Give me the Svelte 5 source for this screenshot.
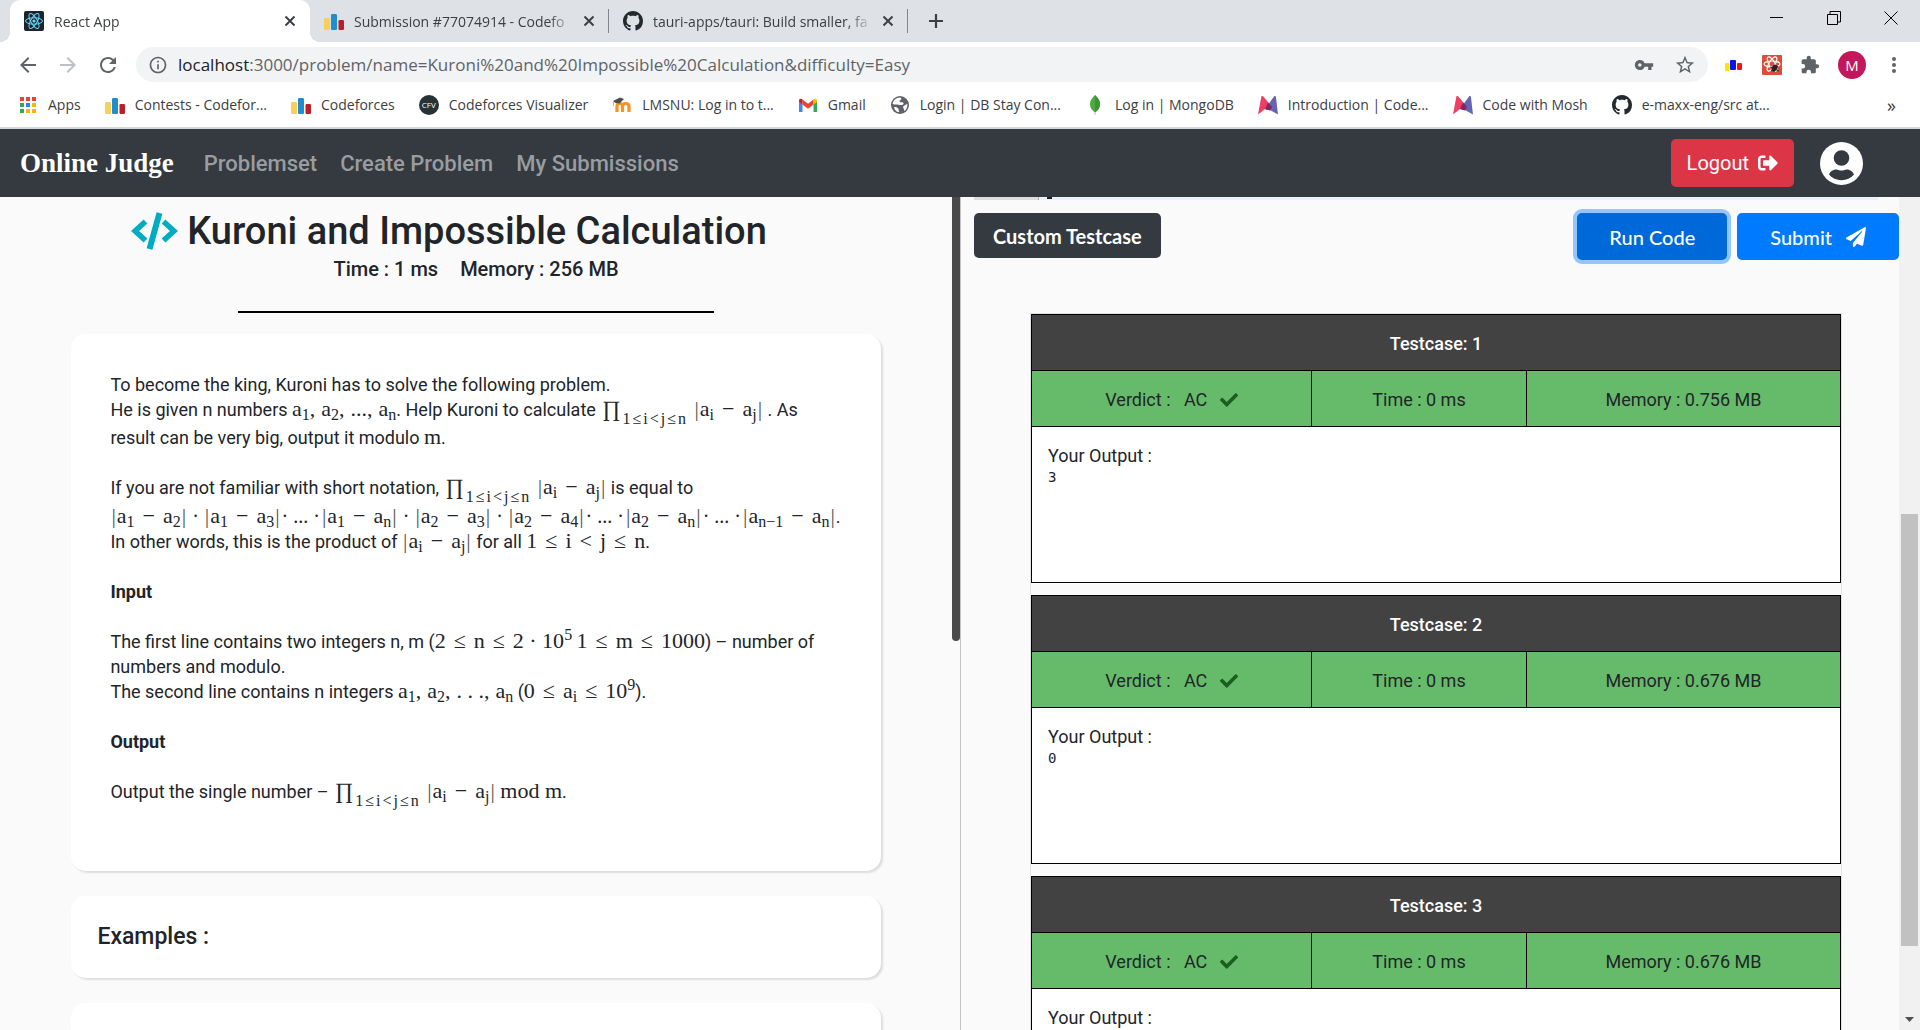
<script>
  const tabs = [
    { title: 'React App', icon: 'react', active: true },
    { title: 'Submission #77074914 - Codefo', icon: 'bars', active: false },
    { title: 'tauri-apps/tauri: Build smaller, fa', icon: 'github', active: false }
  ];

  const bookmarks = [
    { label: 'Apps', icon: 'apps' },
    { label: 'Contests - Codefor...', icon: 'bars' },
    { label: 'Codeforces', icon: 'bars' },
    { label: 'Codeforces Visualizer', icon: 'cfv' },
    { label: 'LMSNU: Log in to t...', icon: 'moodle' },
    { label: 'Gmail', icon: 'gmail' },
    { label: 'Login | DB Stay Con...', icon: 'globe' },
    { label: 'Log in | MongoDB', icon: 'leaf' },
    { label: 'Introduction | Code...', icon: 'mosh' },
    { label: 'Code with Mosh', icon: 'mosh' },
    { label: 'e-maxx-eng/src at...', icon: 'github' }
  ];

  const links = ['Problemset', 'Create Problem', 'My Submissions'];

  const results = [
    { id: 1, verdict: 'AC', time: '0 ms', memory: '0.756 MB', output: '3' },
    { id: 2, verdict: 'AC', time: '0 ms', memory: '0.676 MB', output: '0' },
    { id: 3, verdict: 'AC', time: '0 ms', memory: '0.676 MB', output: '' }
  ];

  let path = $state(':3000/problem/name=Kuroni%20and%20Impossible%20Calculation&difficulty=Easy');
</script>

{#snippet icon(name)}
  {#if name === 'react'}
    <svg class="fav" viewBox="0 0 20 20" aria-hidden="true">
      <rect width="20" height="20" rx="2" fill="#20232a" />
      <g fill="none" stroke="#61dafb" stroke-width="1">
        <ellipse cx="10" cy="10" rx="8.5" ry="3.2" />
        <ellipse cx="10" cy="10" rx="8.5" ry="3.2" transform="rotate(60 10 10)" />
        <ellipse cx="10" cy="10" rx="8.5" ry="3.2" transform="rotate(120 10 10)" />
      </g>
      <circle cx="10" cy="10" r="1.6" fill="#61dafb" />
    </svg>
  {:else if name === 'bars'}
    <svg class="fav" viewBox="0 0 20 20" aria-hidden="true">
      <rect x="0" y="7" width="6" height="12" rx="1.2" fill="#f8cf58" />
      <rect x="7" y="3" width="6" height="16" rx="1.2" fill="#1f8dcf" />
      <rect x="14.500" y="9" width="5.500" height="10" rx="1.2" fill="#b8202c" />
    </svg>
  {:else if name === 'github'}
    <svg class="fav" viewBox="0 0 16 16" aria-hidden="true">
      <path fill="#24292e" d="M8 0C3.58 0 0 3.58 0 8c0 3.54 2.29 6.53 5.47 7.59.4.07.55-.17.55-.38 0-.19-.01-.82-.01-1.490-2.010.37-2.530-.49-2.690-.94-.09-.23-.48-.94-.82-1.130-.28-.15-.68-.52-.01-.53.63-.01 1.080.58 1.230.82.72 1.210 1.870.87 2.330.66.07-.52.28-.87.51-1.070-1.780-.2-3.640-.89-3.640-3.950 0-.87.31-1.590.82-2.150-.08-.2-.36-1.020.08-2.120 0 0 .67-.21 2.200.82.64-.18 1.320-.27 2-.27s1.360.09 2 .27c1.530-1.040 2.200-.82 2.200-.82.44 1.100.16 1.920.08 2.120.51.56.82 1.270.82 2.150 0 3.070-1.870 3.750-3.650 3.950.29.25.54.73.54 1.480 0 1.070-.01 1.930-.01 2.200 0 .21.15.46.55.38A8.010 8.010 0 0 0 16 8c0-4.420-3.580-8-8-8z" />
    </svg>
  {:else if name === 'apps'}
    <svg class="fav apps" viewBox="0 0 18 20" aria-hidden="true">
      <g fill="#ea4335"><rect x="0" y="2" width="4" height="4" /><rect x="6" y="2" width="4" height="4" /><rect x="12" y="2" width="4" height="4" /></g>
      <rect x="0" y="8" width="4" height="4" fill="#34a853" /><rect x="6" y="8" width="4" height="4" fill="#1a8cff" /><rect x="12" y="8" width="4" height="4" fill="#fbb605" />
      <rect x="0" y="14" width="4" height="4" fill="#34a853" /><rect x="6" y="14" width="4" height="4" fill="#fbb605" /><rect x="12" y="14" width="4" height="4" fill="#fbb605" />
    </svg>
  {:else if name === 'cfv'}
    <span class="cfv">CFV</span>
  {:else if name === 'moodle'}
    <svg class="fav" viewBox="0 0 20 20" aria-hidden="true">
      <path d="M5 17v-5.500c0-4 5.500-4 5.500 0V17m0-5.500c0-4 6.500-4 6.500 0V17" fill="none" stroke="#f7931e" stroke-width="3.200" />
      <path d="M1 6l7-3.500L12 4 7.500 8.500 3.500 8z" fill="#4d4d4d" />
      <path d="M1.500 6v5" stroke="#b9a184" stroke-width=".8" />
    </svg>
  {:else if name === 'gmail'}
    <svg class="fav" viewBox="0 0 20 20" aria-hidden="true">
      <path fill="#4285f4" d="M1 17h3.500V9L1 6z" /><path fill="#34a853" d="M15.500 17H19V6l-3.500 3z" />
      <path fill="#ea4335" d="M4.500 9.500V4.500L10 8.700l5.500-4.200v5L10 13.700z" />
      <path fill="#c5221f" d="M1 5.500v1.300l3.500 2.700v-5C3 3 1 3.700 1 5.500z" />
      <path fill="#fbbc04" d="M19 5.500v1.300l-3.500 2.700v-5C17 3 19 3.700 19 5.500z" />
    </svg>
  {:else if name === 'globe'}
    <svg class="fav" viewBox="0 0 20 20" aria-hidden="true">
      <circle cx="10" cy="10" r="9" fill="#5f6368" />
      <path fill="#fff" d="M10 2.500c2 .5 1.500 2 .5 2.500S9 6.500 10 7s3-.5 3.500 1-1 2-2.500 2-3-.5-5-.5S2.500 9 2.600 9C3 5.500 6 2.500 10 2.500zM4 12c2 0 4 .5 4.500 2s0 2.500 1 3C6.500 17.500 4.500 15 4 12zM17.400 9c.3 3-1 5.500-3 7-.5-1-.2-2-.9-2.800s-.5-2.200 1-2.700S16 9 17.400 9z" />
    </svg>
  {:else if name === 'leaf'}
    <svg class="fav" viewBox="0 0 20 20" aria-hidden="true">
      <path fill="#4faa41" d="M10 0c4 4 5 6.500 5 9.500 0 3-2 6-5 8-3-2-5-5-5-8C5 6.500 6 4 10 0z" />
      <path fill="#3f9436" d="M10 0c4 4 5 6.500 5 9.500 0 3-2 6-5 8z" /><path d="M10 17v3" stroke="#c2bfbf" />
    </svg>
  {:else if name === 'mosh'}
    <svg class="fav" viewBox="0 0 20 20" aria-hidden="true">
      <path fill="#f03d63" d="M3.500 1C5 .5 6 2 7 3.500L14 12l-2 3-5-1-7 5.500z" />
      <path fill="#6464b2" d="M16 1.500c1-.8 1.800-.3 2 1l2 17-8-4.500-5-1z" />
      <path fill="#7c2a63" d="M10.200 7.500L14 12l-2 3.500L7 14z" />
    </svg>
  {/if}
{/snippet}

{#snippet cross()}
  <svg class="x" viewBox="0 0 12 12" aria-hidden="true"><path d="M1.500 1.500l9 9m0-9l-9 9" stroke="#3c4043" stroke-width="2" /></svg>
{/snippet}

{#snippet term(i)}<span>a<sub>{i}</sub></span>{/snippet}

{#snippet diff(i, j)}<span class="m"><span class="bar">|</span>{@render term(i)}<span class="op">−</span>{@render term(j)}<span class="bar">|</span></span>{/snippet}

{#snippet prod()}<span class="m"><span class="pi">∏</span><sub class="range">1<u>≤</u>i<u>&lt;</u>j<u>≤</u>n</sub></span> {@render diff('i', 'j')}{/snippet}

<div class="window">
  <header class="chrome">
    <div class="tabs">
      {#each tabs as tab}
        <div class="tab" class:active={tab.active}>
          {@render icon(tab.icon)}
          <span class="title">{tab.title}</span>
          <button class="plain" aria-label="Close tab">{@render cross()}</button>
        </div>
      {/each}
      <button class="plain add" aria-label="New tab">
        <svg width="16" height="16" viewBox="0 0 16 16"><path d="M8 1v14M1 8h14" stroke="#3c4043" stroke-width="2.200" /></svg>
      </button>
      <div class="controls">
        <button class="plain" aria-label="Minimize"><svg width="14" height="14" viewBox="0 0 14 14"><path d="M0 6.500h13" stroke="#000" /></svg></button>
        <button class="plain" aria-label="Restore"><svg width="14" height="14" viewBox="0 0 14 14" fill="none" stroke="#000"><path d="M.5 3.500h10v10H.5zM3 3V.5h10.500V11H11" /></svg></button>
        <button class="plain" aria-label="Close window"><svg width="14" height="14" viewBox="0 0 14 14"><path d="M.5.500l13 13m0-13l-13 13" stroke="#000" /></svg></button>
      </div>
    </div>

    <div class="toolbar">
      <button class="plain" aria-label="Back"><svg width="24" height="24" viewBox="0 0 24 24"><path fill="#5f6368" d="M20 11H7.830l5.590-5.590L12 4l-8 8 8 8 1.410-1.410L7.830 13H20v-2z" /></svg></button>
      <button class="plain" aria-label="Forward"><svg width="24" height="24" viewBox="0 0 24 24"><path fill="#bdc1c6" d="M12 4l-1.410 1.410L16.170 11H4v2h12.170l-5.580 5.590L12 20l8-8z" /></svg></button>
      <button class="plain" aria-label="Reload"><svg width="24" height="24" viewBox="0 0 24 24"><path fill="#5f6368" d="M17.650 6.350A7.958 7.958 0 0 0 12 4c-4.420 0-7.990 3.580-7.990 8s3.570 8 7.990 8c3.730 0 6.840-2.550 7.730-6h-2.080A5.990 5.990 0 0 1 12 18c-3.310 0-6-2.690-6-6s2.690-6 6-6c1.660 0 3.140.69 4.220 1.780L13 11h7V4l-2.350 2.350z" /></svg></button>
      <div class="omnibox">
        <svg width="20" height="20" viewBox="0 0 24 24" aria-hidden="true"><path fill="#5f6368" d="M11 17h2v-6h-2v6zm1-15C6.480 2 2 6.480 2 12s4.480 10 10 10 10-4.480 10-10S17.520 2 12 2zm0 18c-4.410 0-8-3.590-8-8s3.590-8 8-8 8 3.590 8 8-3.590 8-8 8zM11 9h2V7h-2v2z" /></svg>
        <label for="url">localhost</label>
        <input id="url" type="text" bind:value={path} />
        <button class="plain" aria-label="Passwords"><svg width="20" height="20" viewBox="0 0 24 24"><path fill="#5f6368" d="M12.650 10A5.990 5.990 0 0 0 7 6c-3.310 0-6 2.690-6 6s2.690 6 6 6a5.990 5.990 0 0 0 5.650-4H17v4h4v-4h2v-4H12.650zM7 14c-1.100 0-2-.9-2-2s.9-2 2-2 2 .9 2 2-.9 2-2 2z" /></svg></button>
        <button class="plain" aria-label="Bookmark"><svg width="22" height="22" viewBox="0 0 24 24"><path fill="#5f6368" d="M22 9.240l-7.190-.62L12 2 9.190 8.630 2 9.240l5.460 4.730L5.820 21 12 17.270 18.180 21l-1.630-7.030L22 9.240zM12 15.400l-3.760 2.270 1-4.280-3.320-2.880 4.380-.38L12 6.100l1.710 4.040 4.380.38-3.320 2.880 1 4.280L12 15.400z" /></svg></button>
      </div>
      <div class="extensions">
        <button class="plain" aria-label="Codeforces extension">
          <svg width="20" height="20" viewBox="0 0 20 20"><rect x="1" y="8" width="4.500" height="8" rx="1" fill="#ffe600" /><rect x="6" y="5" width="6" height="10" rx="1" fill="#0a14f0" /><rect x="13" y="8" width="5" height="7" rx="1" fill="#f01414" /></svg>
        </button>
        <button class="plain" aria-label="React developer tools">
          <svg width="20" height="20" viewBox="0 0 20 20"><rect width="20" height="20" rx="1" fill="#dd4b39" /><g fill="none" stroke="#fff" stroke-width="1.100"><ellipse cx="10" cy="9" rx="8" ry="3" /><ellipse cx="10" cy="9" rx="8" ry="3" transform="rotate(60 10 9)" /><ellipse cx="10" cy="9" rx="8" ry="3" transform="rotate(120 10 9)" /></g><ellipse cx="12.500" cy="13" rx="2.600" ry="3.600" fill="#20232a" transform="rotate(35 12.500 13)" /><path d="M8 12l9 4M9 16l7-5M12 17l2-7" stroke="#20232a" /></svg>
        </button>
        <button class="plain" aria-label="Extensions">
          <svg width="20" height="20" viewBox="0 0 24 24"><path fill="#5f6368" d="M20.500 11H19V7c0-1.100-.9-2-2-2h-4V3.500a2.500 2.500 0 0 0-5 0V5H4c-1.100 0-2 .9-2 2v3.800h1.500a2.700 2.700 0 0 1 0 5.400H2V20c0 1.100.9 2 2 2h3.800v-1.500a2.700 2.700 0 0 1 5.400 0V22H17c1.100 0 2-.9 2-2v-4h1.500a2.500 2.500 0 0 0 0-5z" /></svg>
        </button>
        <button class="plain profile" aria-label="Profile">M</button>
        <button class="plain" aria-label="Menu">
          <svg width="20" height="20" viewBox="0 0 20 20" fill="#5f6368"><circle cx="10" cy="4" r="2" /><circle cx="10" cy="10" r="2" /><circle cx="10" cy="16" r="2" /></svg>
        </button>
      </div>
    </div>

    <nav class="bookmarks" aria-label="Bookmarks">
      {#each bookmarks as mark}
        <a href="#bookmark">{@render icon(mark.icon)}<span>{mark.label}</span></a>
      {/each}
      <button class="plain more" aria-label="More bookmarks">»</button>
    </nav>
  </header>

  <nav class="navbar" aria-label="Main">
    <a class="brand" href="#home">Online Judge</a>
    {#each links as link}
      <a class="link" href="#nav">{link}</a>
    {/each}
    <button class="logout">
      Logout
      <svg width="20" height="20" viewBox="0 0 512 512" aria-hidden="true"><path fill="#fff" d="M497 273L329 441c-15 15-41 4.500-41-17v-96H152c-13.300 0-24-10.700-24-24v-96c0-13.300 10.700-24 24-24h136V88c0-21.400 25.900-32 41-17l168 168c9.300 9.400 9.300 24.600 0 34zM192 436v-40c0-6.600-5.400-12-12-12H96c-17.700 0-32-14.300-32-32V160c0-17.700 14.300-32 32-32h84c6.600 0 12-5.400 12-12V76c0-6.600-5.400-12-12-12H96c-53 0-96 43-96 96v192c0 53 43 96 96 96h84c6.600 0 12-5.400 12-12z" /></svg>
    </button>
    <a class="account" href="#account" aria-label="Account">
      <svg width="43" height="43" viewBox="0 0 43 43"><circle cx="21.500" cy="21.500" r="21.500" fill="#fff" /><ellipse cx="21.500" cy="16" rx="7.800" ry="7.700" fill="#343a40" /><path fill="#343a40" d="M9 32.500c1.500-4.500 7-6 9.500-4.600 2 .9 4 .9 6 0C27 26.500 32.500 28 34 32.500c-6 7.500-19 7.500-25 0z" /></svg>
    </a>
  </nav>

  <main>
    <section class="problem">
      <div class="scroll">
        <h1>
          <svg width="47" height="38" viewBox="0 0 47 38" aria-hidden="true"><g fill="none" stroke="#00acc1"><path d="M14.500 9.500L4 19l10.500 9.500M32.500 9.500L43 19l-10.500 9.500" stroke-width="5.500" /><path d="M28.500 1L18.500 37" stroke-width="6" /></g></svg>
          Kuroni and Impossible Calculation
        </h1>
        <p class="limits"><span>Time : 1 ms</span><span>Memory : 256 MB</span></p>
        <hr />

        <article class="card statement">
          <div class="para">
            <p>To become the king, Kuroni has to solve the following problem.</p>
            <p class="tall">He is given n numbers <span class="m">{@render term('1')}<i>,</i>{@render term('2')}<i>,</i>...<i>,</i>{@render term('n')}</span>. Help Kuroni to calculate {@render prod()} . As</p>
            <p>result can be very big, output it modulo <span class="m">m</span>.</p>
          </div>
          <div class="para">
            <p class="tall">If you are not familiar with short notation, {@render prod()} is equal to</p>
            <p class="equation">{@render diff('1', '2')}<b>·</b>{@render diff('1', '3')}<b class="dots">· ... ·</b>{@render diff('1', 'n')}<b>·</b>{@render diff('2', '3')}<b>·</b>{@render diff('2', '4')}<b class="dots">· ... ·</b>{@render diff('2', 'n')}<b class="dots">· ... ·</b>{@render diff('n−1', 'n')}.</p>
            <p>In other words, this is the product of {@render diff('i', 'j')} for all <span class="m">1<span class="op">≤</span>i<span class="op">&lt;</span>j<span class="op">≤</span>n</span>.</p>
          </div>
          <h3>Input</h3>
          <div class="para">
            <p>The first line contains two integers n, m (<span class="m">2<span class="op">≤</span>n<span class="op">≤</span>2 · 10<sup>5</sup></span> <span class="m">1<span class="op">≤</span>m<span class="op">≤</span>1000</span>) – number of</p>
            <p>numbers and modulo.</p>
            <p>The second line contains n integers <span class="m">{@render term('1')}<i>,</i>{@render term('2')}<i>,</i>. . .<i>,</i>{@render term('n')}</span> (<span class="m">0<span class="op">≤</span>{@render term('i')}<span class="op">≤</span>10<sup>9</sup></span>).</p>
          </div>
          <h3>Output</h3>
          <div class="para">
            <p class="tall">Output the single number – {@render prod()} <span class="m">mod m</span>.</p>
          </div>
        </article>

        <article class="card"><h2>Examples :</h2></article>
        <article class="card"></article>
      </div>
      <div class="rail"></div>
    </section>

    <section class="editor">
      <div class="scroll">
        <div class="code-edge"><span class="gutter"></span><span class="glyph"></span></div>
        <div class="actions">
          <button class="btn dark">Custom Testcase</button>
          <button class="btn run">Run Code</button>
          <button class="btn submit">
            Submit
            <svg width="20" height="20" viewBox="0 0 512 512" aria-hidden="true"><path fill="#fff" d="M476 3.200L12.500 270.600c-18.100 10.400-15.800 35.600 2.200 43.200L121 358.400l287.300-253.200c5.500-4.900 13.300 2.600 8.600 8.300L176 407v80.500c0 23.600 28.500 32.900 42.500 15.800L282 426l124.600 52.200c14.200 6 30.400-2.900 33-18.200l72-432C515 7.800 493.300-6.800 476 3.200z" /></svg>
          </button>
        </div>
        <div class="results">
          {#each results as r}
            <table>
              <colgroup><col class="c1" /><col class="c2" /><col class="c3" /></colgroup>
              <thead><tr><th colspan="3">Testcase: {r.id}</th></tr></thead>
              <tbody>
                <tr class="verdict">
                  <td>Verdict : &nbsp; {r.verdict}
                    <svg width="18" height="18" viewBox="0 0 512 512" aria-hidden="true"><path fill="#1b5e20" d="M173.898 439.404l-166.400-166.400c-9.997-9.997-9.997-26.206 0-36.204l36.203-36.204c9.997-9.998 26.207-9.998 36.204 0L192 312.690 432.095 72.596c9.997-9.997 26.207-9.997 36.204 0l36.203 36.204c9.997 9.997 9.997 26.206 0 36.204l-294.400 294.401c-9.998 9.997-26.207 9.997-36.204-.001z" /></svg>
                  </td>
                  <td>Time : {r.time}</td>
                  <td>Memory : {r.memory}</td>
                </tr>
                <tr class="output"><td colspan="3">Your Output :<pre>{r.output}</pre></td></tr>
              </tbody>
            </table>
          {/each}
        </div>
      </div>
      <div class="scrollbar">
        <span class="thumb"></span>
        <svg width="9" height="5" viewBox="0 0 9 5" aria-hidden="true"><path d="M0 0h9L4.500 5z" fill="#505050" /></svg>
      </div>
    </section>
  </main>
</div>

<style>
  :global(body) { margin: 0; }
  * { box-sizing: border-box; }
  p, h1, h2, h3, pre { margin: 0; }
  a { color: inherit; text-decoration: none; }
  svg { display: block; flex: none; }
  button { font: inherit; cursor: pointer; }
  .plain { display: flex; align-items: center; justify-content: center; padding: 0; border: 0; background: none; flex: none; }

  .window { display: flex; flex-direction: column; height: 100vh; overflow: hidden; font-family: Roboto, sans-serif; color: #212529; }

  .chrome { flex: none; font-family: "Open Sans", sans-serif; color: #3c4043; background: #fff; border-bottom: 2px solid #d5d7da; }
  .tabs { display: flex; align-items: center; height: 42px; padding-left: 10px; background: #dee1e6; }
  .tab { display: flex; align-items: center; gap: 10px; width: 299px; height: 42px; padding: 0 14px; font-size: 14px; }
  .tab.active { position: relative; width: 300px; background: #fff; border-radius: 10px 10px 0 0; }
  .tab.active::before, .tab.active::after { content: ""; position: absolute; bottom: 0; width: 10px; height: 10px; }
  .tab.active::before { left: -10px; background: radial-gradient(circle at 0 0, transparent 10px, #fff 10px); }
  .tab.active::after { right: -10px; background: radial-gradient(circle at 100% 0, transparent 10px, #fff 10px); }
  .tab:not(.active) { background: linear-gradient(#80868b, #80868b) right center / 1px 24px no-repeat; }
  .title { flex: 1; overflow: hidden; white-space: nowrap; mask-image: linear-gradient(to left, transparent, #000 24px); }
  .x { width: 12px; height: 12px; }
  .fav { width: 20px; height: 20px; flex: none; }
  .apps { width: 18px; }
  .add { width: 56px; }
  .controls { display: flex; gap: 43px; margin-left: auto; padding: 0 22px 6px 0; }

  .toolbar { display: flex; align-items: center; gap: 16px; height: 45px; padding: 0 16px; }
  .omnibox { flex: 1; display: flex; align-items: center; height: 35px; padding: 0 12px; background: #f1f3f4; border-radius: 18px; font-size: 17px; }
  .omnibox label { padding-left: 10px; color: #202124; }
  .omnibox input { flex: 1; min-width: 0; padding: 0; border: 0; background: none; font: inherit; color: #5f6368; outline: 0; }
  .omnibox button { margin-left: 20px; }
  .extensions { display: flex; align-items: center; gap: 18px; }
  .profile { width: 28px; height: 28px; border-radius: 50%; background: #c2185b; color: #fff; font-size: 15px; }

  .bookmarks { display: flex; align-items: center; gap: 24px; height: 40px; padding: 0 20px 5px; font-size: 14px; }
  .bookmarks a { display: flex; align-items: center; gap: 10px; white-space: nowrap; }
  .cfv { width: 20px; height: 20px; border-radius: 50%; background: #263238; color: #fff; font-size: 8px; line-height: 20px; text-align: center; }
  .more { margin-left: auto; margin-right: 4px; font-size: 18px; color: #3c4043; }

  .navbar { flex: none; display: flex; align-items: center; gap: 23px; height: 68px; padding: 0 57px 0 20px; background: #343a40; }
  .brand { margin-right: 7px; color: #fff; font: bold 27px "Liberation Serif", serif; }
  .link { color: #9a9da0; font-size: 22px; font-weight: 500; }
  .logout { display: flex; align-items: center; gap: 9px; height: 48px; margin-left: auto; padding: 0 16px; border: 0; border-radius: 5px; background: #dc3545; color: #fff; font-size: 20px; }
  .account { margin-left: 3px; }

  main { flex: 1; min-height: 0; display: grid; grid-template-columns: 1fr 1fr; background: #fafafa; }
  section { display: flex; min-width: 0; min-height: 0; }
  .scroll { flex: 1; min-width: 0; overflow: hidden; }

  .rail { width: 8px; height: 444px; border-radius: 0 0 4px 4px; background: #4a4a4a; }
  h1 { display: flex; align-items: center; justify-content: center; gap: 9px; padding: 10px 54px 0 0; font-size: 38px; line-height: 48px; font-weight: 500; white-space: nowrap; }
  .limits { display: flex; justify-content: center; gap: 22px; font-size: 20px; line-height: 28px; font-weight: 500; }
  hr { width: 50%; height: 2px; margin: 28px auto 21px; border: 0; background: #000; }
  .card { width: 85%; min-height: 82px; margin: 0 auto 25px; padding: 26px; border-radius: 15px; background: #fff; box-shadow: 2px 2px 2px #ddd; }
  .card h2 { font-size: 23px; line-height: 30px; font-weight: 500; }
  .statement { padding: 38px 39px 64px; font-size: 18px; line-height: 25px; white-space: nowrap; }
  .statement p { height: 25px; }
  .statement .tall { height: 28px; }
  .statement .equation { height: 26px; line-height: 28px; }
  .para + h3 { margin-top: 25px; }
  .para + .para { margin-top: 25px; }
  h3 { margin-bottom: 25px; font-size: 18px; line-height: 25px; font-weight: 700; }
  .m { font-family: "Liberation Serif", serif; font-size: 22px; line-height: 1px; }
  .m sub, .m sup { font-size: 16px; line-height: 1px; }
  .m sub { vertical-align: -4px; }
  .m sup { vertical-align: 8px; }
  .m sub.range { margin-right: 3px; vertical-align: -8px; }
  .m i { padding-right: 6px; font-style: normal; }
  .op { padding: 0 8px; }
  u { padding: 0 2px; text-decoration: none; }
  .pi { padding: 0 2px; }
  .bar { padding: 0 1px; color: #555; }
  .equation b { padding: 0 5px; font: 20px "Liberation Serif", serif; line-height: 1px; }
  .equation .dots { padding: 0 1px; }

  .editor { border-left: 1px solid #c4c4c4; }
  .code-edge { display: flex; height: 3px; margin: 0 21px 0 13px; background: #e8f2fe; }
  .gutter { width: 65px; background: #ddd; border-right: 1px solid #aaa; }
  .glyph { width: 5px; height: 2px; margin-left: 8px; background: #222; }
  .actions { display: flex; align-items: flex-start; gap: 10px; padding: 13px 0 0 13px; }
  .btn { display: flex; align-items: center; justify-content: center; gap: 14px; height: 47px; padding: 0 33px; border: 0; border-radius: 5px; color: #fff; font-family: Lato, sans-serif; font-size: 20px; font-weight: 500; white-space: nowrap; }
  .dark { height: 45px; padding: 0 19px; margin-right: auto; background: #343a40; font-weight: 700; }
  .run { padding: 0 32px; background: #0069d9; box-shadow: 0 0 0 4px #93c6ff; }
  .submit { background: #007bff; }
  .results { margin: 53px 57px 0 69px; border: 1px solid #dee2e6; }
  table { width: 100%; margin-bottom: 12px; border-collapse: collapse; table-layout: fixed; background: #fff; font-size: 18px; }
  .c1 { width: 280px; }
  .c2 { width: 215px; }
  th, td { height: 56px; padding: 2px 0 0; border: 1px solid #000; text-align: center; }
  th { background: #424242; color: #fff; font-weight: 500; }
  .verdict td { background: #66bb6a; }
  .verdict svg { display: inline-block; margin-left: 8px; vertical-align: -3px; }
  .output td { height: 156px; padding: 16px; text-align: left; vertical-align: top; line-height: 26px; }
  pre { font: 14px/16px "DejaVu Sans Mono", monospace; }
  .scrollbar { display: flex; flex-direction: column; align-items: center; width: 21px; padding: 317px 0 8px; background: #f1f1f1; }
  .thumb { width: 17px; height: 432px; margin-bottom: auto; background: #c1c1c1; }
</style>
